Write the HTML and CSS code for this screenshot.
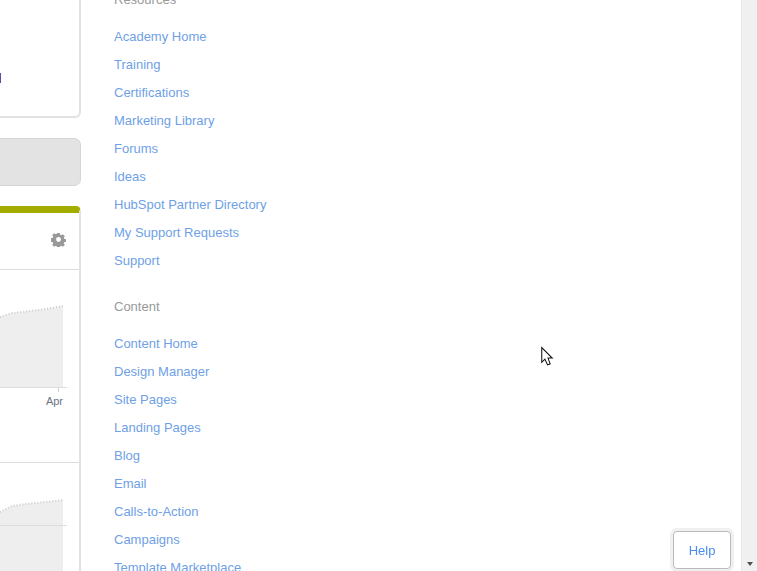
FILE: index.html
```html
<!DOCTYPE html>
<html lang="en">
<head>
  <meta charset="UTF-8">
  <meta name="viewport" content="width=device-width, initial-scale=1.0">
  <title>Dashboard</title>
  <link rel="stylesheet" href="styles.css">
</head>
<body>
  <div class="page">
    <div class="left">
      <div class="card card-top"><span class="visited-bit"></span></div>
      <div class="notice"></div>
      <div class="card card-chart">
        <div class="card-head">
          <svg class="gear" viewBox="0 0 16 16" width="15" height="15">
            <path fill="#999" fill-rule="evenodd" d="M6.600 1h2.800l.4 2 1.200.5 1.700-1.100 2 2-1.100 1.700.5 1.200 2 .4v2.800l-2 .4-.5 1.200 1.100 1.700-2 2-1.700-1.100-1.200.5-.4 2H6.600l-.4-2-1.200-.5-1.700 1.100-2-2 1.100-1.700-.5-1.200-2-.4V6.600l2-.4.5-1.200-1.100-1.700 2-2 1.700 1.100 1.200-.5zM8 5.400a2.600 2.600 0 1 0 0 5.200 2.600 2.600 0 0 0 0-5.200z"/>
          </svg>
        </div>
        <div class="chart-one">
          <svg class="chart" viewBox="0 0 79 192" width="79" height="192">
            <path fill="#eee" d="M0 47L12 43L30 41L45 39L63 36V117H0z"/>
            <path fill="none" stroke="#ccc" stroke-width="2" stroke-dasharray="1 2" d="M0 47L12 43L30 41L45 39L63 36"/>
            <path stroke="#ddd" d="M0 117.500H67"/>
            <path stroke="#c0d0e0" d="M58.500 118V122"/>
            <text x="63" y="135" text-anchor="end" class="axis-label">Apr</text>
          </svg>
        </div>
        <div class="chart-two">
          <svg class="chart" viewBox="0 0 79 108" width="79" height="108">
            <path fill="#eee" d="M0 49L12 43L25 41L45 39L63 37V108H0z"/>
            <path fill="none" stroke="#ccc" stroke-width="2" stroke-dasharray="1 2" d="M0 49L12 43L25 41L45 39L63 37"/>
            <path stroke="#ddd" d="M0 62.500H67"/>
          </svg>
        </div>
      </div>
    </div>

    <div class="nav">
      <h4 class="nav-title">Resources</h4>
      <ul class="nav-list">
        <li><a href="#">Academy Home</a></li>
        <li><a href="#">Training</a></li>
        <li><a href="#">Certifications</a></li>
        <li><a href="#">Marketing Library</a></li>
        <li><a href="#">Forums</a></li>
        <li><a href="#">Ideas</a></li>
        <li><a href="#">HubSpot Partner Directory</a></li>
        <li><a href="#">My Support Requests</a></li>
        <li><a href="#">Support</a></li>
      </ul>
      <h4 class="nav-title">Content</h4>
      <ul class="nav-list">
        <li><a href="#">Content Home</a></li>
        <li><a href="#">Design Manager</a></li>
        <li><a href="#">Site Pages</a></li>
        <li><a href="#">Landing Pages</a></li>
        <li><a href="#">Blog</a></li>
        <li><a href="#">Email</a></li>
        <li><a href="#">Calls-to-Action</a></li>
        <li><a href="#">Campaigns</a></li>
        <li><a href="#">Template Marketplace</a></li>
      </ul>
    </div>

    <div class="scrollbar"><span class="scroll-arrow"></span></div>
  </div>

  <button class="help-btn">Help</button>

  <svg class="cursor" viewBox="0 0 13 20" width="14" height="21">
    <path fill="#fff" stroke="#111" d="M1.500 1.500V15.500L4.500 12.500L7 18L9.500 17L7.500 11.500H11.500z"/>
  </svg>
</body>
</html>
```

FILE: styles.css
```css
html, body {
  margin: 0;
  height: 100%;
  overflow: hidden;
}

body {
  font-family: "Liberation Sans", Arial, sans-serif;
  font-size: 13px;
  background: #fff;
}

.page {
  display: flex;
  height: 571px;
  overflow: hidden;
}

.left {
  flex: 0 0 81px;
  width: 81px;
}

.card {
  box-sizing: border-box;
  width: 81px;
  background: #fff;
  border-right: 2px solid #e2e2e2;
}

.card-top {
  position: relative;
  height: 118px;
  border-bottom: 2px solid #e2e2e2;
  border-bottom-right-radius: 6px;
}

.visited-bit {
  position: absolute;
  left: 0;
  top: 73px;
  width: 1px;
  height: 10px;
  background: #5b4bb0;
}

.notice {
  box-sizing: border-box;
  height: 48px;
  margin-top: 20px;
  background: #e3e3e3;
  border: 1px solid #d6d6d6;
  border-left: 0;
  border-radius: 0 7px 7px 0;
}

.card-chart {
  height: 365px;
  margin-top: 20px;
  border-top: 7px solid #a2ad00;
  border-top-right-radius: 5px;
}

.card-head {
  box-sizing: border-box;
  display: flex;
  justify-content: flex-end;
  align-items: center;
  height: 57px;
  padding: 0 13px 3px 0;
  border-bottom: 1px solid #ddd;
}

.chart-one {
  height: 193px;
  border-bottom: 1px solid #ddd;
  box-sizing: border-box;
}

.chart {
  display: block;
}

.axis-label {
  font-size: 11px;
  fill: #6b7480;
}

.nav {
  flex: 1;
  padding-left: 33px;
  margin-top: -14px;
}

.nav-title {
  margin: 0;
  height: 28px;
  line-height: 28px;
  font-size: 13px;
  font-weight: normal;
  color: #999;
}

.nav-list {
  list-style: none;
  margin: 9px 0 18px;
  padding: 0;
}

.nav-list li {
  height: 28px;
  line-height: 28px;
}

.nav-list a {
  color: #6f9fe6;
  font-size: 13px;
  text-decoration: none;
}

.scrollbar {
  position: relative;
  box-sizing: border-box;
  flex: 0 0 16px;
  background: #f0f0f0;
  border-left: 1px solid #e8e8e8;
}

.scroll-arrow {
  position: absolute;
  left: 5px;
  bottom: 5px;
  border: 3px solid transparent;
  border-bottom: 0;
  border-top: 4px solid #505050;
}

/* stays over the page, like the real widget */
.help-btn {
  position: fixed;
  left: 673px;
  top: 531px;
  width: 58px;
  height: 38px;
  background: #fff;
  border: 1px solid #bbb;
  border-radius: 4px;
  box-shadow: 0 0 0 3px #f0f0f0;
  color: #4a8cf0;
  font-family: inherit;
  font-size: 13px;
  padding: 0;
}

.cursor {
  position: fixed;
  left: 540px;
  top: 346px;
}
```
